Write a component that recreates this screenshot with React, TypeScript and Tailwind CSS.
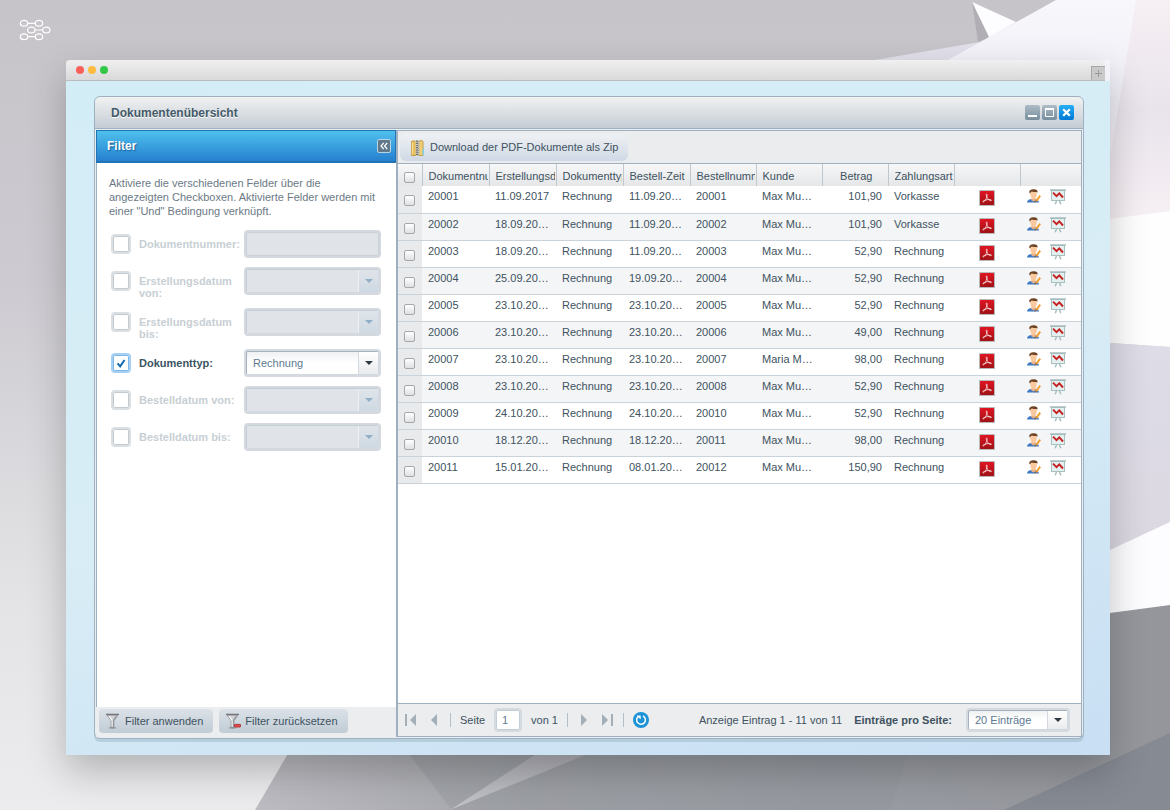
import { useState } from "react";
import type { ReactNode } from "react";
import { clsx } from "clsx";

interface DocumentRow {
  number: string;
  created: string;
  type: string;
  orderTime: string;
  orderNumber: string;
  customer: string;
  amount: string;
  payment: string;
}

interface FilterField {
  id: string;
  label: string;
  kind: "text" | "select";
  options?: string[];
}

const FILTER_FIELDS: FilterField[] = [
  { id: "documentNumber", label: "Dokumentnummer:", kind: "text" },
  { id: "createdFrom", label: "Erstellungsdatum von:", kind: "select" },
  { id: "createdTo", label: "Erstellungsdatum bis:", kind: "select" },
  { id: "documentType", label: "Dokumenttyp:", kind: "select", options: ["Rechnung"] },
  { id: "orderedFrom", label: "Bestelldatum von:", kind: "select" },
  { id: "orderedTo", label: "Bestelldatum bis:", kind: "select" },
];

const HEADERS = [
  "Dokumentnummer",
  "Erstellungsdatum",
  "Dokumenttyp",
  "Bestell-Zeit",
  "Bestellnummer",
  "Kunde",
  "Betrag",
  "Zahlungsart",
  "",
  "",
];

const row = (
  number: string,
  created: string,
  orderTime: string,
  orderNumber: string,
  customer: string,
  amount: string,
  payment: string,
): DocumentRow => ({ number, created, type: "Rechnung", orderTime, orderNumber, customer, amount, payment });

const ROWS: DocumentRow[] = [
  row("20001", "11.09.2017", "11.09.20…", "20001", "Max Mu…", "101,90", "Vorkasse"),
  row("20002", "18.09.20…", "11.09.20…", "20002", "Max Mu…", "101,90", "Vorkasse"),
  row("20003", "18.09.20…", "11.09.20…", "20003", "Max Mu…", "52,90", "Rechnung"),
  row("20004", "25.09.20…", "19.09.20…", "20004", "Max Mu…", "52,90", "Rechnung"),
  row("20005", "23.10.20…", "23.10.20…", "20005", "Max Mu…", "52,90", "Rechnung"),
  row("20006", "23.10.20…", "23.10.20…", "20006", "Max Mu…", "49,00", "Rechnung"),
  row("20007", "23.10.20…", "23.10.20…", "20007", "Maria M…", "98,00", "Rechnung"),
  row("20008", "23.10.20…", "23.10.20…", "20008", "Max Mu…", "52,90", "Rechnung"),
  row("20009", "24.10.20…", "24.10.20…", "20010", "Max Mu…", "52,90", "Rechnung"),
  row("20010", "18.12.20…", "18.12.20…", "20011", "Max Mu…", "98,00", "Rechnung"),
  row("20011", "15.01.20…", "08.01.20…", "20012", "Max Mu…", "150,90", "Rechnung"),
];

/* ---------- icons ---------- */

function Logo() {
  return (
    <svg width="32" height="22" viewBox="0 0 32 22" fill="none" stroke="#fff" strokeWidth="1.2">
      <ellipse cx="5" cy="4.3" rx="3.700" ry="2.900" />
      <ellipse cx="20" cy="4.3" rx="3.700" ry="2.900" />
      <ellipse cx="12.300" cy="11" rx="3.700" ry="2.900" />
      <ellipse cx="27.300" cy="11" rx="3.700" ry="2.900" />
      <ellipse cx="5" cy="17.700" rx="3.700" ry="2.900" />
      <ellipse cx="20" cy="17.700" rx="3.700" ry="2.900" />
      <path d="M8.700 4.300h7.600M16 11h7.600M8.700 17.700h7.600" />
    </svg>
  );
}

function ZipIcon() {
  return (
    <svg width="16" height="16" viewBox="0 0 16 16">
      <path d="M2 1h3l1 1v13.500H1.500V1.500z" fill="#e9c15c" stroke="#b98d2f" strokeWidth=".8" />
      <path d="M9 .8h3.500l.5 1V15.500H9z" fill="#f0cf74" stroke="#b98d2f" strokeWidth=".8" />
      <path d="M2.300 2.300v12" stroke="#fae7a8" />
      <path d="M5.500.5h4v15h-4z" fill="#d9d4c4" />
      <path d="M7 .5v15" stroke="#555" strokeWidth="1.600" strokeDasharray="1.200 1" />
      <path d="M8.300 1.200v14.500" stroke="#777" strokeWidth="1" strokeDasharray="1 1.200" />
      <path d="M12.500 9.500 14 8v6.500l-1.500 1z" fill="#7fd3ee" />
    </svg>
  );
}

function FunnelIcon({ minus }: { minus?: boolean }) {
  return (
    <svg width="16" height="16" viewBox="0 0 16 16">
      <ellipse cx="7.500" cy="14.800" rx="3.800" ry=".9" fill="#8f989f" />
      <path d="M1.500 1.500h12L8.800 7.800v6.400H6.200V7.800z" fill="#d2d4d7" stroke="#7a7e84" strokeWidth=".8" />
      <path d="m4 3.200 3.200 4.500v6" stroke="#fafafa" strokeWidth="1.200" fill="none" />
      <path d="m10.800 3.200-2.500 4v6.500" stroke="#8b8e93" strokeWidth=".9" fill="none" />
      <path d="M1 1.300h13" stroke="#6d6d73" strokeWidth="1.100" />
      <path d="M3 2.400h9" stroke="#a9a4ae" strokeWidth="1" />
      {minus && <rect x="9.500" y="11.400" width="6" height="2.600" rx=".5" fill="#ea5052" stroke="#a8191d" strokeWidth=".8" />}
    </svg>
  );
}

function PdfIcon() {
  return (
    <svg width="16" height="16" viewBox="0 0 16 16">
      <defs>
        <linearGradient id="pdfRed" x1="0" y1="0" x2="0" y2="1">
          <stop offset="0" stopColor="#e01422" />
          <stop offset="1" stopColor="#a01216" />
        </linearGradient>
      </defs>
      <rect width="16" height="16" rx=".5" fill="#b9b9b9" />
      <rect x="1" y="1" width="14" height="14" rx=".8" fill="url(#pdfRed)" />
      <path
        d="M7.700 4c-.7 0-.5 1.600.3 3.200 1 2 2.600 3.600 3.900 3.500 1 0 .8-1.100-.9-1.200-2-.1-4.300.3-6 1.100-1.300.7-1.500 1.500-.8 1.400C5.500 11.800 7.300 9 8 6.500 8.300 5.200 8.300 4 7.700 4z"
        fill="none"
        stroke="#fbe6e6"
        strokeWidth=".8"
      />
    </svg>
  );
}

function UserEditIcon() {
  return (
    <svg width="16" height="16" viewBox="0 0 16 16">
      <path d="M1 13.600c.2-2.400 2-3.300 4.600-3.600h3.600c2 .3 3.300 1.300 3.800 3.600z" fill="#3d78c4" />
      <path d="M5.500 9h4l.5 2-2.500 1.500L5 11z" fill="#eeb284" />
      <path d="M4.300 4.500C4.300 1.900 5.500 1 7.500 1s3.300 1 3.300 3.500c0 3-1.200 5.600-3.200 5.600S4.300 7.500 4.300 4.500z" fill="#f9c89e" />
      <path d="M3.300 3.800C2.800 1.500 4.500.2 7.500.2c2.800 0 4.600 1 3.900 3.300-.3.300-.6.100-.8-.5-1.700.2-3.300 0-4.600-.6-.9.200-1.400.9-1.600 1.600-.5.300-.9.200-1.100-.2z" fill="#6d4323" />
      <path d="m14.200 6.700-4 5.400" stroke="#f0a030" strokeWidth="2" />
      <path d="m9.700 11.400-1.500 2.400 2.600-1z" fill="#9a6a3c" />
    </svg>
  );
}

function ChartBoardIcon() {
  return (
    <svg width="16" height="16" viewBox="0 0 16 16">
      <path d="m6.500 12-1.300 3.300M9.500 12l1.300 3.300" stroke="#a9bfc0" strokeWidth="1.500" />
      <rect x="1.500" y="1.500" width="13" height="10" fill="#e3f0ef" stroke="#a9c0c0" />
      <path d="M0 1h16" stroke="#a3b9ba" strokeWidth="1.400" />
      <path d="m3 3.700 3.500 3.500 2.800-2.800L13 8.500" fill="none" stroke="#c4201f" strokeWidth="1.900" />
    </svg>
  );
}

function Arrow({ direction, bar }: { direction: "left" | "right"; bar?: boolean }) {
  return (
    <svg width="14" height="14" viewBox="0 0 14 14" fill="#a3afb8">
      <g transform={direction === "right" ? "rotate(180 7 7)" : undefined}>
        <path d={bar ? "M12 1v12L6 7z" : "M10 1v12L4 7z"} />
        {bar && <rect x="1" y="1" width="2" height="12" />}
      </g>
    </svg>
  );
}

function RefreshIcon() {
  return (
    <svg width="16" height="16" viewBox="0 0 16 16" fill="none">
      <circle cx="8" cy="8" r="8" fill="#1b93d6" />
      <path d="M10 4a4.400 4.400 0 1 1-4.600.4" stroke="#fff" strokeWidth="1.500" />
      <path d="M3.700 3.400h4v4z" fill="#fff" />
    </svg>
  );
}

/* ---------- controls ---------- */

interface ComboProps {
  id: string;
  options?: string[];
  disabled?: boolean;
  className?: string;
}

function Combo({ id, options = [""], disabled, className }: ComboProps) {
  return (
    <div className={clsx("relative rounded-sm border-2", disabled ? "border-[#d3d9df]" : "border-[#d5dae1]", className)}>
      <select
        id={id}
        disabled={disabled}
        className={clsx(
          "block h-full w-full appearance-none rounded-xs border pr-6 pl-1.5 text-[11px] text-[#5d7a92] outline-none",
          disabled
            ? "border-[#c6ced5] border-r-[#d3d9df] border-b-[#d3d9df] bg-[#e0e4e8] opacity-100"
            : "border-[#a5b2bd] border-r-[#d2d8de] border-b-[#d2d8de] bg-linear-to-b from-[#eff1f2] via-white to-white",
        )}
      >
        {options.map((option) => (
          <option key={option}>{option}</option>
        ))}
      </select>
      <span
        className={clsx(
          "pointer-events-none absolute top-px right-px bottom-px flex w-5 items-center justify-center border-l",
          disabled
            ? "border-[#eef0f3] bg-linear-to-b from-[#dfe4e9] to-[#ced9e3]"
            : "border-[#d3d9de] bg-linear-to-b from-white to-[#e9ebed]",
        )}
      >
        <svg width="8" height="4" viewBox="0 0 8 4" fill={disabled ? "#91afc7" : "#303c45"}>
          <path d="M0 0h8L4 4z" />
        </svg>
      </span>
    </div>
  );
}

function FilterRow({ field }: { field: FilterField }) {
  const [enabled, setEnabled] = useState(field.id === "documentType");

  return (
    <div className="flex items-start">
      <span className="relative mt-1 flex size-5 shrink-0">
        <input
          type="checkbox"
          aria-label={`${field.label} aktivieren`}
          checked={enabled}
          onChange={(e) => setEnabled(e.target.checked)}
          className={clsx(
            "size-5 appearance-none rounded-sm border-2 bg-white inset-ring",
            enabled ? "border-[#a4d0f5] inset-ring-[#7eb6e4]" : "border-[#dadfe3] inset-ring-[#c3cacf]",
          )}
        />
        {enabled && (
          <svg className="pointer-events-none absolute inset-0" width="20" height="20" viewBox="0 0 20 20" fill="none">
            <path d="m6.500 10.300 2.700 3L13.500 7" stroke="#1267ae" strokeWidth="2" />
          </svg>
        )}
      </span>
      <label
        htmlFor={field.id}
        className={clsx(
          "ml-2 w-[105px] shrink-0 pt-2 text-[11px] leading-3 font-bold",
          enabled ? "text-[#3c5564]" : "text-[#c8cfd4]",
        )}
      >
        {field.label}
      </label>
      {field.kind === "text" ? (
        <input
          id={field.id}
          type="text"
          disabled={!enabled}
          className="h-7 min-w-0 flex-1 rounded-sm border-2 border-[#d3d9df] bg-[#e0e4e8] px-1.5 text-[11px] inset-ring inset-ring-[#c9d0d7]"
        />
      ) : (
        <Combo id={field.id} options={field.options} disabled={!enabled} className="h-7 min-w-0 flex-1" />
      )}
    </div>
  );
}

function ToolbarButton({ icon, children }: { icon: ReactNode; children: ReactNode }) {
  return (
    <button
      type="button"
      className="flex h-6 items-center gap-1 rounded-sm bg-linear-to-b from-[#dbe1e7] to-[#c1ccd6] pr-2.5 pl-1.5 whitespace-nowrap"
    >
      {icon}
      {children}
    </button>
  );
}

function MiniCheckbox({ label }: { label: string }) {
  return (
    <input
      type="checkbox"
      aria-label={label}
      className="block size-[11px] appearance-none rounded-xs border border-[#a4a8ab] bg-linear-to-b from-white to-[#dfe0e1] checked:bg-[#5b9bd5]"
    />
  );
}

function Separator() {
  return <span className="h-3.5 w-px bg-[#b3bec7]" />;
}

/* ---------- page parts ---------- */

function Backdrop() {
  return (
    <svg
      className="absolute inset-0 -z-10 h-full w-full"
      viewBox="0 0 1170 810"
      preserveAspectRatio="xMidYMid slice"
      aria-hidden="true"
    >
      <defs>
        <linearGradient id="wall" x1="0" y1="0" x2="0" y2="1">
          <stop offset="0" stopColor="#c6c3c9" />
          <stop offset=".35" stopColor="#cdcbd1" />
          <stop offset=".75" stopColor="#e4e4e6" />
          <stop offset="1" stopColor="#ececee" />
        </linearGradient>
        <linearGradient id="floor" x1="0" y1="0" x2="1" y2="0">
          <stop offset="0" stopColor="#bcbcc2" />
          <stop offset=".3" stopColor="#a4a5aa" />
          <stop offset=".6" stopColor="#9a9da4" />
          <stop offset="1" stopColor="#94969b" />
        </linearGradient>
        <linearGradient id="streak" x1="1" y1="0" x2="0" y2="1">
          <stop offset="0" stopColor="#a9a9b0" />
          <stop offset="1" stopColor="#c2c2ca" />
        </linearGradient>
        <linearGradient id="upper" x1="0" y1="0" x2="0" y2="1">
          <stop offset="0" stopColor="#f8f7fb" />
          <stop offset=".4" stopColor="#f1f0f8" />
          <stop offset="1" stopColor="#f3edf2" />
        </linearGradient>
        <linearGradient id="side" x1="0" y1="0" x2="0" y2="1">
          <stop offset="0" stopColor="#f6f0f4" />
          <stop offset=".5" stopColor="#e9e3ec" />
          <stop offset="1" stopColor="#f7f0f4" />
        </linearGradient>
        <linearGradient id="lilac" x1="0" y1="0" x2="0" y2="1">
          <stop offset="0" stopColor="#dddce7" />
          <stop offset="1" stopColor="#dcd8e2" />
        </linearGradient>
      </defs>
      <rect width="1170" height="810" fill="url(#wall)" />
      <path d="M840 66 980 42l-10 40H840z" fill="#e2e1eb" />
      <path d="M930 70 1056 0h114v215l-60 4z" fill="url(#upper)" />
      <path d="m972 2 44 20-28 16z" fill="#fdfdff" />
      <path d="m972 2 17 35-11 5z" fill="#b1afb5" />
      <path d="M1136 0h34v210l-60 12v-65z" fill="url(#side)" />
      <path d="m1110 219 60-8v136l-60-4z" fill="#fefefe" />
      <path d="m1110 343 60 4v175l-60 29z" fill="url(#lilac)" />
      <path d="m1110 550 60-28v84l-60 7z" fill="#fdfdff" />
      <path d="M296 740 255 810h915V605l-60 8-4 127z" fill="url(#floor)" />
      <path d="m402 745 50 65h438l20-65z" fill="#92959c" opacity=".4" />
      <path d="M610 745h-60l-100 65z" fill="url(#streak)" />
      <path d="m1004 810 166-77v77z" fill="#868a93" />
    </svg>
  );
}

function FilterPanel() {
  return (
    <aside className="flex w-[301px] shrink-0 flex-col border-r border-[#9fb1c0] bg-white">
      <div className="flex h-[33px] items-center justify-between border border-b-2 border-[#2374b5] bg-linear-to-b from-[#4fc0ec] to-[#2680d0] pr-1 pl-2.5">
        <h2 className="text-xs font-bold text-white text-shadow-[1px_1px_1px_#1b5e96]">Filter</h2>
        <button
          type="button"
          aria-label="Filter einklappen"
          className="flex size-[14px] items-center justify-center rounded-xs border border-[#b9d3e5] bg-[#61798b]"
        >
          <svg width="8" height="8" viewBox="0 0 8 8" fill="none" stroke="#fff" strokeWidth="1.200">
            <path d="M3.700 1 1 4l2.700 3M7.200 1 4.500 4l2.700 3" />
          </svg>
        </button>
      </div>
      <form className="flex flex-1 flex-col border-l border-[#9fb1c0] pt-[13px] pr-[15px] pl-3.5">
        <p className="-mx-0.5 text-[11px] leading-3.5 text-[#6b7985]">
          Aktiviere die verschiedenen Felder über die angezeigten Checkboxen. Aktivierte Felder werden mit einer
          "Und" Bedingung verknüpft.
        </p>
        <div className="mt-3 flex flex-col gap-[9px]">
          {FILTER_FIELDS.map((field) => (
            <FilterRow key={field.id} field={field} />
          ))}
        </div>
      </form>
      <div className="flex h-[30px] items-start gap-1.5 bg-[#ebedef] px-[3px] pt-0.5">
        <ToolbarButton icon={<FunnelIcon />}>Filter anwenden</ToolbarButton>
        <ToolbarButton icon={<FunnelIcon minus />}>Filter zurücksetzen</ToolbarButton>
      </div>
    </aside>
  );
}

function DocumentTable() {
  return (
    <table className="w-full table-fixed border-collapse">
      <colgroup>
        <col className="w-6" />
        <col className="w-[67px]" />
        <col className="w-[67px]" />
        <col className="w-[67px]" />
        <col className="w-[67px]" />
        <col className="w-[66px]" />
        <col className="w-[66px]" />
        <col className="w-[66px]" />
        <col className="w-[66px]" />
        <col className="w-[66px]" />
        <col />
      </colgroup>
      <thead>
        <tr className="h-[22px] bg-linear-to-b from-[#f7f7f8] to-[#e4e6e8] leading-4">
          <th className="p-0 pt-1 pl-1.5">
            <MiniCheckbox label="Alle auswählen" />
          </th>
          {HEADERS.map((header, index) => (
            <th key={index} className="border-l border-[#bfc8cf] p-0 pt-0.5 pr-px pl-1.5 font-normal">
              <div
                className={clsx(
                  "overflow-hidden whitespace-nowrap",
                  header === "Betrag" ? "pr-3.5 text-right" : "text-left",
                )}
              >
                {header}
              </div>
            </th>
          ))}
        </tr>
      </thead>
      <tbody>
        {ROWS.map((doc) => (
          <tr
            key={doc.number}
            className="h-[27px] border-b border-[#cad3da] align-top leading-5 whitespace-nowrap even:bg-[#f4f5f7]"
          >
            <td className="bg-[#e9eaec] p-0 pt-[9px] pl-1.5">
              <MiniCheckbox label={`Dokument ${doc.number} auswählen`} />
            </td>
            <td className="p-0 pl-1.5">{doc.number}</td>
            <td className="p-0 pl-1.5">{doc.created}</td>
            <td className="p-0 pl-1.5">{doc.type}</td>
            <td className="p-0 pl-1.5">{doc.orderTime}</td>
            <td className="p-0 pl-1.5">{doc.orderNumber}</td>
            <td className="p-0 pl-1.5">{doc.customer}</td>
            <td className="p-0 pr-1.5 text-right">{doc.amount}</td>
            <td className="p-0 pl-1.5">{doc.payment}</td>
            <td className="p-0 pt-1">
              <a href="#pdf" aria-label="PDF öffnen" className="mx-auto block size-4">
                <PdfIcon />
              </a>
            </td>
            <td className="p-0 pt-[3px]">
              <div className="flex gap-2 pl-1.5">
                <a href="#kunde" aria-label="Kunde öffnen">
                  <UserEditIcon />
                </a>
                <a href="#bestellung" aria-label="Bestellung öffnen">
                  <ChartBoardIcon />
                </a>
              </div>
            </td>
          </tr>
        ))}
      </tbody>
    </table>
  );
}

function Pager() {
  return (
    <div className="flex h-[33px] items-center border-t border-[#9fb1c0] bg-[#ebedef] pr-[11px] pl-1.5">
      <div className="flex items-center gap-[9px]">
        <button type="button" aria-label="Erste Seite">
          <Arrow direction="left" bar />
        </button>
        <button type="button" aria-label="Vorherige Seite">
          <Arrow direction="left" />
        </button>
        <Separator />
        <label htmlFor="page">Seite</label>
        <input
          id="page"
          type="text"
          defaultValue="1"
          className="h-6 w-7 rounded-sm border-2 border-[#d5dae1] bg-white pl-1.5 text-[11px] text-[#5d7a92] inset-ring inset-ring-[#c6ced5]"
        />
        <span>von 1</span>
        <Separator />
        <button type="button" aria-label="Nächste Seite">
          <Arrow direction="right" />
        </button>
        <button type="button" aria-label="Letzte Seite">
          <Arrow direction="right" bar />
        </button>
        <Separator />
        <button type="button" aria-label="Aktualisieren">
          <RefreshIcon />
        </button>
      </div>
      <span className="ml-auto">Anzeige Eintrag 1 - 11 von 11</span>
      <label htmlFor="perPage" className="ml-3 font-bold">
        Einträge pro Seite:
      </label>
      <Combo id="perPage" options={["20 Einträge"]} className="ml-3.5 h-6 w-[104px]" />
    </div>
  );
}

function WindowButtons() {
  const gray = "flex size-[15px] items-center justify-center rounded-xs bg-linear-to-b from-[#aebcc6] to-[#778e9d]";
  return (
    <div className="flex gap-0.5">
      <button type="button" aria-label="Minimieren" className={gray}>
        <svg width="9" height="9" viewBox="0 0 9 9">
          <path d="M0 7h9v2H0z" fill="#fff" />
        </svg>
      </button>
      <button type="button" aria-label="Maximieren" className={gray}>
        <svg width="9" height="9" viewBox="0 0 9 9" fill="none" stroke="#fff">
          <path d="M0 1h9" strokeWidth="2" />
          <path d="M.5 1v7.500h8V1" />
        </svg>
      </button>
      <button
        type="button"
        aria-label="Schließen"
        className="flex size-[15px] items-center justify-center rounded-xs bg-linear-to-b from-[#27aef5] to-[#0079d6]"
      >
        <svg width="9" height="9" viewBox="0 0 9 9" stroke="#fff" strokeWidth="2.200">
          <path d="m1.200 1.200 6.600 6.600M7.800 1.200 1.200 7.800" />
        </svg>
      </button>
    </div>
  );
}

export default function App() {
  return (
    <div className="relative isolate flex min-h-screen flex-col overflow-hidden pr-[60px] pb-[55px] pl-[66px] font-['Liberation_Sans',Arial,sans-serif] text-[11px] text-[#40525e]">
      <Backdrop />
      <header className="-ml-[47px] flex h-[60px] items-center">
        <a href="#start" aria-label="Startseite">
          <Logo />
        </a>
      </header>

      <div className="flex flex-1 flex-col shadow-[0_16px_36px_rgba(0,0,0,0.24)]">
        <div className="mr-[5px] flex h-[21px] items-center gap-1 rounded-t-sm border-b border-[#bdbdbd] bg-linear-to-b from-[#f0f0f0] to-[#d9d9d9] pl-2.5">
          <span className="size-2 rounded-full bg-[#fb5f5a]" />
          <span className="size-2 rounded-full bg-[#fdbc40]" />
          <span className="size-2 rounded-full bg-[#33c748]" />
          <button
            type="button"
            aria-label="Neuer Tab"
            className="mt-auto ml-auto flex h-[14px] w-[14px] items-center justify-center border-t border-l border-[#a9a9a9] bg-[#c9c9c9]"
          >
            <svg width="7" height="7" viewBox="0 0 7 7" stroke="#999" strokeWidth="1">
              <path d="M3.500 0v7M0 3.500h7" />
            </svg>
          </button>
        </div>

        <div className="flex flex-1 bg-linear-165 from-[#d3edf7] via-[#d8edf5] via-50% to-[#c8dff4] pt-[15px] pr-[26px] pb-4 pl-7">
          <main className="flex min-w-0 flex-1 flex-col rounded-md border border-[#9fb1c0] bg-[#e9eef2] shadow-[0_3px_0_rgba(150,175,190,0.45)]">
            <div className="flex h-8 items-center justify-between rounded-t-md border-b border-[#9fb1c0] bg-linear-to-b from-[#f1f2f2] to-[#c4ccd4] pr-[9px] pl-4">
              <h1 className="text-xs font-bold text-[#445a68] text-shadow-[0_1px_0_#fff]">Dokumentenübersicht</h1>
              <WindowButtons />
            </div>

            <div className="my-px mr-px ml-px flex flex-1">
              <FilterPanel />
              <section className="flex min-w-0 flex-1 flex-col border border-[#9fb1c0] bg-white">
                <div className="flex h-[33px] items-end border-b border-[#9fb1c0] bg-[#ebecee] px-0.5 pb-0.5">
                  <button
                    type="button"
                    className="flex h-[27px] items-center gap-1 rounded-md bg-linear-to-b from-[#eff1f4] to-[#cfd9e5] pr-2.5 pl-2.5"
                  >
                    <ZipIcon />
                    Download der PDF-Dokumente als Zip
                  </button>
                </div>
                <div className="flex-1">
                  <DocumentTable />
                </div>
                <Pager />
              </section>
            </div>
          </main>
        </div>
      </div>
    </div>
  );
}
